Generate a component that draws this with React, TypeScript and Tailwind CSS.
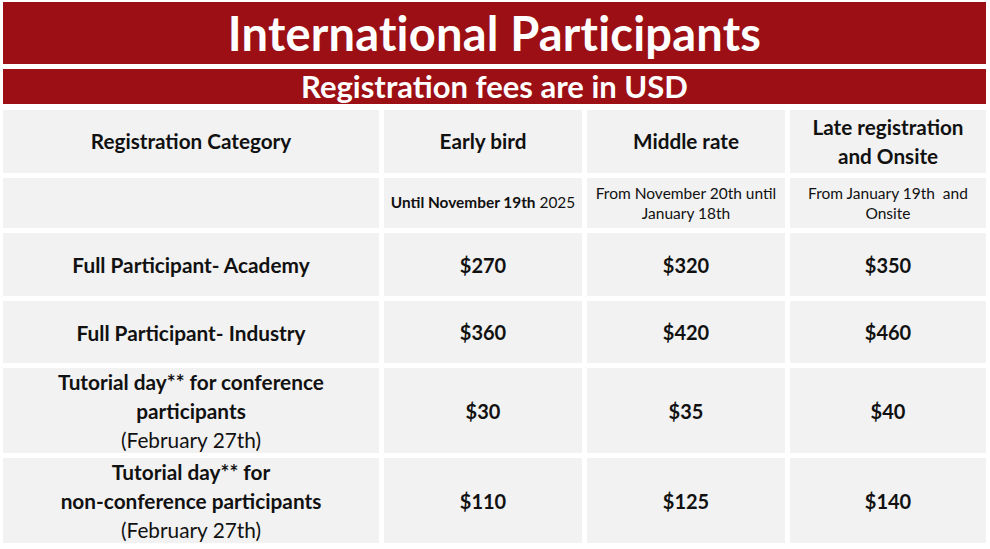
import React from 'react';

const rows = [
  { label: ['Full Participant- Academy'], early: '$270', middle: '$320', late: '$350', h: 'h-[63px]' },
  { label: ['Full Participant- Industry'], early: '$360', middle: '$420', late: '$460', h: 'h-[62px]' },
  {
    label: ['Tutorial day** for conference', 'participants'],
    note: '(February 27th)',
    early: '$30',
    middle: '$35',
    late: '$40',
    h: 'h-[85px]',
  },
  {
    label: ['Tutorial day** for', 'non-conference participants'],
    note: '(February 27th)',
    early: '$110',
    middle: '$125',
    late: '$140',
    h: 'h-[85px]',
  },
];

const Cell: React.FC<{ className?: string; children?: React.ReactNode }> = ({ className = '', children }) => (
  <div className={`bg-[#f2f2f2] flex flex-col items-center justify-center text-center text-[#111] ${className}`}>
    {children}
  </div>
);

const App: React.FC = () => {
  return (
    <div className="w-[990px] h-[549px] bg-white pt-[2px] pl-[3px] font-['Lato','Open_Sans',sans-serif]">
      <div className="w-[983px] flex flex-col">
        {/* Title bands */}
        <div className="h-[62px] bg-[#9c0f14] flex items-center justify-center">
          <h1 className="text-white font-bold text-[47px] leading-none tracking-[0.2px]">International Participants</h1>
        </div>
        <div className="h-[35px] mt-[5px] bg-[#9c0f14] flex items-center justify-center">
          <h2 className="text-white font-bold text-[31px] leading-none">Registration fees are in USD</h2>
        </div>

        {/* Fee table */}
        <div className="mt-[6px] grid grid-cols-[376px_198px_198px_196px] gap-[5px]">
          <Cell className="h-[63px] text-[20.7px] font-bold">Registration Category</Cell>
          <Cell className="h-[63px] text-[20.7px] font-bold">Early bird</Cell>
          <Cell className="h-[63px] text-[20.7px] font-bold">Middle rate</Cell>
          <Cell className="h-[63px] text-[20.7px] font-bold leading-[29px]">
            <span>Late registration</span>
            <span>and Onsite</span>
          </Cell>

          <Cell className="h-[50px]" />
          <Cell className="h-[50px] text-[15.4px]">
            <span>
              <b>Until November 19th</b> 2025
            </span>
          </Cell>
          <Cell className="h-[50px] text-[15.5px] leading-[20px]">
            <span>From November 20th until</span>
            <span>January 18th</span>
          </Cell>
          <Cell className="h-[50px] text-[15.5px] leading-[20px]">
            <span>From January 19th&nbsp; and</span>
            <span>Onsite</span>
          </Cell>

          {rows.map((r) => (
            <React.Fragment key={r.label.join(' ')}>
              <Cell className={`${r.h} text-[20.8px] leading-[29px]`}>
                {r.label.map((l) => (
                  <span key={l} className="font-bold">{l}</span>
                ))}
                {r.note && <span>{r.note}</span>}
              </Cell>
              <Cell className={`${r.h} text-[20px] font-bold`}>{r.early}</Cell>
              <Cell className={`${r.h} text-[20px] font-bold`}>{r.middle}</Cell>
              <Cell className={`${r.h} text-[20px] font-bold`}>{r.late}</Cell>
            </React.Fragment>
          ))}
        </div>
      </div>
    </div>
  );
};

export default App;
